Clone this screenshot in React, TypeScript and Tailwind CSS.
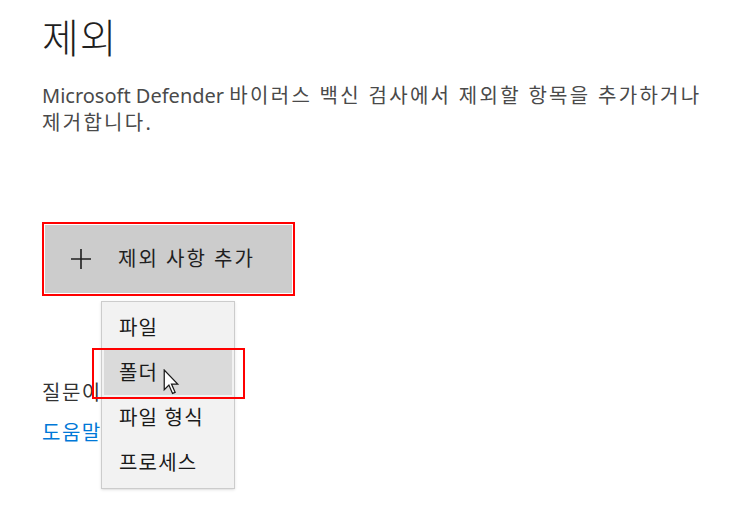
import React from 'react';

const items = ['파일', '폴더', '파일 형식', '프로세스'];

const Cursor: React.FC = () => (
  <svg width="17" height="27" viewBox="0 0 16 26" className="absolute left-[121px] top-[147px] z-30">
    <path
      d="M1 1 L1 20 L5.5 15.5 L9 23.5 L11.5 22.5 L8 14.5 L14 14.5 Z"
      fill="#ffffff"
      stroke="#1a1a1a"
      strokeWidth="1.2"
      strokeLinejoin="miter"
    />
  </svg>
);

export default function App() {
  return (
    <div className="flex h-[524px] w-[732px] flex-col overflow-hidden bg-white pl-[42px] pt-[12px] font-['Noto_Sans','Noto_Sans_CJK_KR',sans-serif]">
      <h1 className="text-[40px] leading-[48px] font-light tracking-[1px] text-[#1f1f1f] font-['Noto_Sans_CJK_KR',sans-serif]">
        제외
      </h1>
      <p className="mt-[22px] w-[680px] text-[20px] leading-[27px] text-[#4a4a4a]">
        Microsoft Defender{' '}
        <span className="tracking-[2.3px]">바이러스 백신 검사에서 제외할 항목을 추가하거나 제거합니다.</span>
      </p>

      <div className="relative mt-[86px] w-[253px]">
        <div className="border-2 border-[#ff0000] p-px">
          <div className="flex h-[68px] items-center gap-[26px] bg-[#cccccc] pl-[25px] text-[20px] tracking-[2px] text-[#1f1f1f]">
            <svg width="22" height="22" viewBox="0 0 22 22">
              <path d="M11 1 V21 M1 11 H21" stroke="#1f1f1f" strokeWidth="1.6" />
            </svg>
            <span>제외 사항 추가</span>
          </div>
        </div>

        <div className="absolute left-[59px] top-[79px] z-10 flex w-[134px] flex-col border border-[#cccccc] bg-[#f2f2f2] px-[2px] py-[3px] shadow-sm">
          {items.map((it, i) => (
            <div
              key={it}
              className={
                i === 1
                  ? 'flex h-[45px] items-center bg-[#dadada] pl-[15px] text-[20px] tracking-[1.2px] text-[#1a1a1a]'
                  : 'flex h-[45px] items-center pl-[15px] text-[20px] tracking-[1.2px] text-[#1a1a1a]'
              }
            >
              {it}
            </div>
          ))}
        </div>

        <div className="absolute left-[50px] top-[126px] z-20 h-[51px] w-[153px] border-2 border-[#ff0000]" />
        <Cursor />
      </div>

      <p className="mt-[83px] text-[20px] leading-[27px] tracking-[1.5px] text-[#333333]">질문이 있으신가요?</p>
      <p className="mt-[13px] text-[20px] leading-[27px] tracking-[1.5px] text-[#0078d7]">도움말 보기</p>
    </div>
  );
}
